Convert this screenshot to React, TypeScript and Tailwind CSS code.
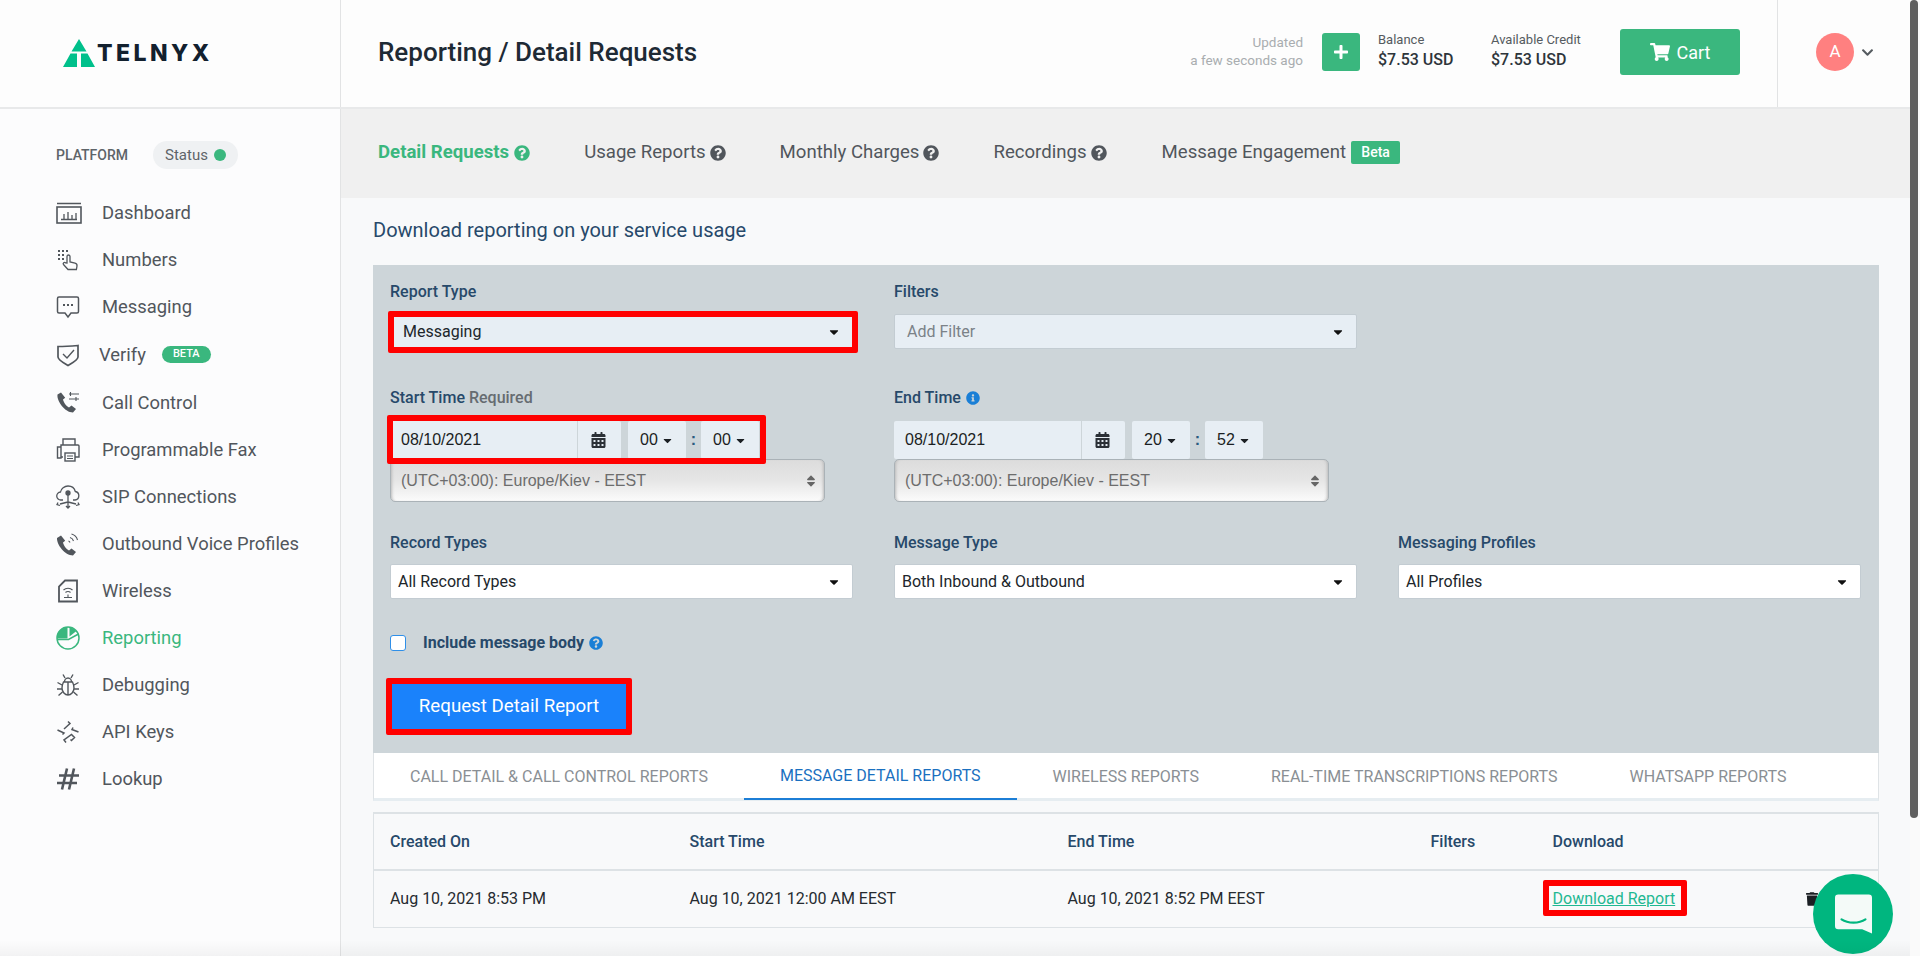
import React from "react";
import { FaCaretDown, FaCalendarAlt, FaChevronDown, FaInfoCircle, FaPlus, FaQuestionCircle, FaShoppingCart, FaSort, FaTrash } from "react-icons/fa";

const iconCls = "w-6 h-6 shrink-0";
const navIcons: Record<string, React.ReactNode> = {
  Dashboard: (
    <svg viewBox="0 0 26 22" className="w-[26px] h-[22px] shrink-0" fill="none" stroke="currentColor" strokeWidth="1.6">
      <rect x="1" y="5" width="24" height="16" />
      <path d="M1 1.5h24M5 17.5h16M8 17v-5M12 17v-7M16 17v-4M20 17v-6" strokeWidth="1.3" />
    </svg>
  ),
  Numbers: (
    <svg viewBox="0 0 24 24" className={iconCls} fill="none" stroke="currentColor" strokeWidth="1.3">
      <path d="M2 3h2M6 3h2M10 3h2M2 7h2M6 7h2M2 11h2M6 11h2" strokeWidth="2" />
      <path d="M11 15V8.5a1.5 1.5 0 0 1 3 0V14l5 1.2c1.5.4 2.2 1.4 2 2.8l-.6 3.5H12l-4.500-5c-1-1.300.8-2.800 2-1.700z" />
    </svg>
  ),
  Messaging: (
    <svg viewBox="0 0 24 24" className={iconCls} fill="none" stroke="currentColor" strokeWidth="1.5">
      <path d="M3 2h18a1.500 1.500 0 0 1 1.500 1.500v13A1.500 1.500 0 0 1 21 18h-6l-3 4-3-4H3a1.500 1.500 0 0 1-1.500-1.500v-13A1.500 1.500 0 0 1 3 2z" />
      <path d="M7 10h2M11 10h2M15 10h2" strokeWidth="2" />
    </svg>
  ),
  Verify: (
    <svg viewBox="0 0 24 24" className={iconCls} fill="none" stroke="currentColor" strokeWidth="1.7">
      <path d="M2 3.500c6 0 14-.5 20-1v11.500c0 3-6 6-10 8.500-4-2.500-10-5.500-10-8.500z" />
      <path d="M7 11l4 4 7-8" strokeWidth="1.4" />
    </svg>
  ),
  "Call Control": (
    <svg viewBox="0 0 24 24" className={iconCls} fill="currentColor">
      <path d="M5 1.500L1.500 3.500C.5 10 9 21.500 17 21.500l3-3.500-4.500-3.500-2.500 2C10 15 7.500 11 7 8.500l2.200-1.800z" />
      <path d="M13 3h10M13 8h10M14.500 1v4M20 6v4" stroke="currentColor" strokeWidth="1.100" fill="none" />
    </svg>
  ),
  "Programmable Fax": (
    <svg viewBox="0 0 24 24" className={iconCls} fill="none" stroke="currentColor" strokeWidth="1.400">
      <path d="M7 7V1h12v6M7 7h15a1 1 0 0 1 1 1v11h-4M7 19H5V7h2M1.500 9H5v11H1.500z" />
      <rect x="9" y="15" width="10" height="8" />
      <path d="M11 18h6M11 20.500h6" strokeWidth="1" />
    </svg>
  ),
  "SIP Connections": (
    <svg viewBox="0 0 24 24" className={iconCls} fill="none" stroke="currentColor" strokeWidth="1.300">
      <path d="M7 15H5a4 4 0 0 1-.5-8C5 3.500 8.500 1 12 1s6.500 2 7.300 5.500A4.300 4.300 0 0 1 19 15h-2" />
      <circle cx="12" cy="8" r="2" fill="currentColor" />
      <path d="M12 10v12M12 17l-8 2M12 17l8 2M10 21l2 2 2-2M2 17.500L1 19.500l3 1M22 17.500l1 2-3 1" />
    </svg>
  ),
  "Outbound Voice Profiles": (
    <svg viewBox="0 0 24 24" className={iconCls} fill="currentColor">
      <path d="M5 3.500L1 6c-.5 6.500 8 17.500 16 17.500l3-3.500-4.500-3.500-2.500 2C10 17 7.500 13 7 10.500l2.200-1.800z" />
      <path d="M14 5.500a5 5 0 0 1 3.500 3.500M15.500 2a8.500 8.500 0 0 1 6 6M12.500 9a2.300 2.300 0 0 1 1.500 1.500" stroke="currentColor" strokeWidth="1.100" fill="none" />
    </svg>
  ),
  Wireless: (
    <svg viewBox="0 0 24 24" className={iconCls} fill="none" stroke="currentColor" strokeWidth="1.800">
      <path d="M9 1.500h12v21H3V7.500z" />
      <path d="M7.500 11a6.500 6.500 0 0 1 9 0M9.500 13.500a3.500 3.500 0 0 1 5 0M8 18.500h8M12 15.500v3" strokeWidth="1.100" />
    </svg>
  ),
  Reporting: (
    <svg viewBox="0 0 24 24" className={iconCls} fill="none">
      <circle cx="12" cy="12" r="11" stroke="#3ab77e" strokeWidth="1.500" />
      <path d="M1 12.500A11 11 0 0 1 11.500 1v11.500zM13.500 1.200A11 11 0 0 1 20.500 5l-7 5.500z" fill="#3ab77e" />
      <path d="M1 13.500h11.500L22.500 8" stroke="#3ab77e" strokeWidth="1.500" />
    </svg>
  ),
  Debugging: (
    <svg viewBox="0 0 24 24" className={iconCls} fill="none" stroke="currentColor" strokeWidth="1.400">
      <path d="M7.500 9h9c1 2 1.500 3.500 1.500 6 0 4-3 7-6 7s-6-3-6-7c0-2.500.5-4 1.500-6zM8.500 9c0-2 1.500-4 3.500-4s3.500 2 3.500 4M12 9v13M9 5L7 1.500M15 5l2-3.500" />
      <path d="M6 12L1.500 9.500M6 16H1M6.500 19l-4 3.500M18 12l4.500-2.500M18 16h5M17.500 19l4 3.500" />
    </svg>
  ),
  "API Keys": (
    <svg viewBox="0 0 24 24" className={iconCls} fill="none" stroke="currentColor" strokeWidth="1.500">
      <path d="M12 1.500l2 2-6 5.500M1.500 10l6.500 3-1.500 1.500M22.500 12l-6.500-2.500 1-2M10 22.500l-2-2.500 7.500-5.500 3 3-3 3-1-1" />
    </svg>
  ),
  Lookup: (
    <svg viewBox="0 0 24 24" className={iconCls} fill="none" stroke="currentColor" strokeWidth="2.600">
      <path d="M11 1.500L6 22.500M18 1.500l-5 21M3 8.500h20M1 16h20" />
    </svg>
  ),
};

const navItems = ["Dashboard", "Numbers", "Messaging", "Verify", "Call Control", "Programmable Fax", "SIP Connections", "Outbound Voice Profiles", "Wireless", "Reporting", "Debugging", "API Keys", "Lookup"];

const reportTabs = ["CALL DETAIL & CALL CONTROL REPORTS", "MESSAGE DETAIL REPORTS", "WIRELESS REPORTS", "REAL-TIME TRANSCRIPTIONS REPORTS", "WHATSAPP REPORTS"];

function RedBox({ className }: { className: string }) {
  return <div className={`absolute border-[6px] border-[#ff0000] rounded-[2px] pointer-events-none ${className}`} />;
}

function Select({ label, tone = "white", muted = false }: { label: string; tone?: "white" | "blue"; muted?: boolean }) {
  return (
    <div className={`h-[35px] w-full rounded-[2px] border border-[#c3ccd2] flex items-center justify-between pr-[11px] text-[16px] ${tone === "blue" ? "bg-[#e7eef4] pl-[12px]" : "bg-white pl-[7px]"} ${muted ? "text-[#7b8288]" : "text-[#20262b]"}`}>
      <span>{label}</span>
      <FaCaretDown className="w-[14px] h-[14px] text-[#111]" />
    </div>
  );
}

function DateTime({ hour, minute, selected }: { hour: string; minute: string; selected?: boolean }) {
  return (
    <div className="relative">
      <div className="flex items-stretch h-[38px] font-['Liberation_Sans',sans-serif] text-[16px] text-[#1b1f23]">
        <div className="w-[187px] bg-[#e7eef4] flex items-center pl-[11px] rounded-l-[2px]">08/10/2021</div>
        <div className="ml-px w-[43px] bg-[#e7eef4] flex items-center justify-center rounded-r-[2px] pr-[2px]">
          <FaCalendarAlt className="w-[15px] h-[16px] text-[#2b3036]" />
        </div>
        <div className="ml-[7px] w-[58px] bg-[#e7eef4] flex items-center justify-center gap-[3px] rounded-[2px]">
          {hour}
          <FaCaretDown className="w-[13px] h-[13px]" />
        </div>
        <div className="w-[15px] flex items-center justify-center text-[#2a5a80] font-bold">:</div>
        <div className="w-[58px] bg-[#e7eef4] flex items-center justify-center gap-[3px] rounded-[2px]">
          {minute}
          <FaCaretDown className="w-[13px] h-[13px]" />
        </div>
      </div>
      {selected && <RedBox className="-left-[3px] -top-[6px] w-[379px] h-[49px]" />}
    </div>
  );
}

function Timezone() {
  return (
    <div className="h-[43px] w-[435px] rounded-[5px] border border-[#aab2b7] bg-gradient-to-b from-[#dcdcdc] via-[#e6e6e6] to-[#fbfbfb] shadow-[inset_3px_0_3px_-2px_#bbb,inset_-3px_0_3px_-2px_#bbb] flex items-center justify-between pl-[10px] pr-[8px] font-['Liberation_Sans',sans-serif] text-[16px] text-[#6d6d6d]">
      <span>(UTC+03:00): Europe/Kiev - EEST</span>
      <FaSort className="w-[10px] h-[14px] text-[#666]" />
    </div>
  );
}

export default function App() {
  return (
    <div className="flex h-screen w-screen overflow-hidden bg-white font-['Roboto',sans-serif]">
      <div className="relative flex-1 min-w-0 flex flex-col">
        {/* Top bar */}
        <header className="h-[109px] shrink-0 flex items-stretch bg-[#fdfdfd] border-b-[2px] border-[#e8e9ea]">
          <div className="w-[341px] shrink-0 border-r border-[#e2e3e4] flex items-center pl-[63px]">
            <svg viewBox="0 0 32 28" className="w-[32px] h-[28px] shrink-0 -mt-[1px]">
              <path d="M16 0l7.500 12.500h-15zM7.500 14.500h6.500V28H0zM18 14.500h6.500L32 28H18z" fill="#00c08b" />
            </svg>
            <span className="ml-[2px] font-['Inter',sans-serif] font-extrabold text-[23px] tracking-[0.15em] text-[#12202e]">TELNYX</span>
          </div>
          <h1 className="ml-[37px] self-center mb-[2px] text-[26px] font-medium text-[#1e2a35]">Reporting / Detail Requests</h1>
          <div className="ml-auto flex items-center">
            <div className="mb-[6px] text-right text-[13.5px] leading-[18px] text-[#a9adb0]">
              <div>Updated</div>
              <div>a few seconds ago</div>
            </div>
            <div className="mb-[3px] ml-[19px] w-[38px] h-[38px] rounded-[3px] bg-[#3ab77e] flex items-center justify-center text-white">
              <FaPlus className="w-[16px] h-[16px]" />
            </div>
            <div className="mb-[8px] ml-[18px] w-[113px]">
              <div className="text-[13px] leading-[20px] text-[#555b60]">Balance</div>
              <div className="text-[16px] leading-[20px] font-medium text-[#2e353b]">$7.53 USD</div>
            </div>
            <div className="mb-[8px] w-[129px]">
              <div className="text-[13px] leading-[20px] text-[#555b60]">Available Credit</div>
              <div className="text-[16px] leading-[20px] font-medium text-[#2e353b]">$7.53 USD</div>
            </div>
            <div className="mb-[3px] w-[120px] h-[46px] rounded-[3px] bg-[#3ab77e] flex items-center justify-center gap-[7px] text-white text-[18px]">
              <FaShoppingCart className="w-[20px] h-[18px]" />
              Cart
            </div>
            <div className="ml-[37px] w-[133px] h-full border-l border-[#e2e3e4] flex items-center pl-[38px]">
              <div className="mb-[3px] w-[38px] h-[38px] rounded-full bg-[#ff8080] flex items-center justify-center text-white text-[17px]">A</div>
              <FaChevronDown className="mb-[3px] ml-[7px] w-[13px] h-[13px] text-[#555b60]" />
            </div>
          </div>
        </header>

        <div className="flex-1 min-h-0 flex">
          {/* Sidebar */}
          <aside className="w-[341px] shrink-0 bg-[#fcfcfd] border-r border-[#e2e3e4] pl-[56px] pt-[32px]">
            <div className="flex items-center h-[28px]">
              <span className="text-[14px] font-medium text-[#5e6469] w-[97px]">PLATFORM</span>
              <span className="h-[28px] rounded-full bg-[#eff1f3] flex items-center gap-[6px] pl-[12px] pr-[12px] text-[15px] text-[#5e6469]">
                Status
                <span className="w-[12px] h-[12px] rounded-full bg-[#3ab77e]" />
              </span>
            </div>
            <nav className="mt-[20px] flex flex-col">
              {navItems.map((item) => (
                <div key={item} className={`${item === "Verify" ? "h-[49px]" : "h-[47px]"} flex items-center text-[18.4px] ${item === "Reporting" ? "text-[#3ab77e]" : "text-[#51565c]"}`}>
                  <span className="w-[46px] shrink-0">{navIcons[item]}</span>
                  <span className={item === "Verify" ? "-ml-[3px]" : ""}>{item}</span>
                  {item === "Verify" && (
                    <span className="ml-[16px] h-[17px] px-[11px] rounded-full bg-[#3ab77e] text-white text-[11px] font-medium flex items-center">BETA</span>
                  )}
                </div>
              ))}
            </nav>
          </aside>

          <main className="flex-1 min-w-0 bg-[#f8f9fa] overflow-hidden">
            {/* Section tabs */}
            <div className="h-[89px] pb-[1px] bg-[#f0f0f0] flex items-center pl-[37px] gap-[54px] text-[18.6px] text-[#51565c]">
              <span className="flex items-center gap-[5px] font-bold text-[#3ab77e]">
                Detail Requests
                <FaQuestionCircle className="w-[16px] h-[16px]" />
              </span>
              {["Usage Reports", "Monthly Charges", "Recordings"].map((tab) => (
                <span key={tab} className="flex items-center gap-[4px]">
                  {tab}
                  <FaQuestionCircle className="w-[16px] h-[16px]" />
                </span>
              ))}
              <span className="ml-[1px] flex items-center gap-[5px]">
                Message Engagement
                <span className="h-[23px] w-[49px] rounded-[2px] bg-[#3ab77e] text-white text-[14px] font-medium flex items-center justify-center">Beta</span>
              </span>
            </div>

            <div className="pl-[32px] pr-[31px]">
              <h2 className="h-[67px] pb-[3px] flex items-center text-[20px] text-[#27496a]">Download reporting on your service usage</h2>

              {/* Filter form */}
              <section className="bg-[#cdd5d9] h-[488px] pl-[17px] pr-[16px] pt-[17px]">
                <div className="grid grid-cols-[463px_463px_463px] gap-x-[41px]">
                  <div>
                    <label className="block text-[16px] leading-[20px] font-medium text-[#27496a]">Report Type</label>
                    <div className="relative mt-[12px]">
                      <Select label="Messaging" tone="blue" />
                      <RedBox className="-left-[2px] -top-[3px] w-[470px] h-[42px]" />
                    </div>
                  </div>
                  <div>
                    <label className="block text-[16px] leading-[20px] font-medium text-[#27496a]">Filters</label>
                    <div className="mt-[12px]">
                      <Select label="Add Filter" tone="blue" muted />
                    </div>
                  </div>
                  <div />

                  <div className="mt-[39px]">
                    <label className="block text-[16px] leading-[20px] font-medium text-[#27496a]">
                      Start Time <span className="text-[#666c71]">Required</span>
                    </label>
                    <div className="mt-[13px]">
                      <DateTime hour="00" minute="00" selected />
                      <Timezone />
                    </div>
                  </div>
                  <div className="mt-[39px]">
                    <label className="flex items-center gap-[5px] text-[16px] leading-[20px] font-medium text-[#27496a]">
                      End Time <FaInfoCircle className="w-[14px] h-[14px] text-[#1a7fd6]" />
                    </label>
                    <div className="mt-[13px]">
                      <DateTime hour="20" minute="52" />
                      <Timezone />
                    </div>
                  </div>
                  <div />

                  <div className="mt-[31px]">
                    <label className="block text-[16px] leading-[20px] font-medium text-[#27496a]">Record Types</label>
                    <div className="mt-[11px]"><Select label="All Record Types" /></div>
                  </div>
                  <div className="mt-[31px]">
                    <label className="block text-[16px] leading-[20px] font-medium text-[#27496a]">Message Type</label>
                    <div className="mt-[11px]"><Select label="Both Inbound & Outbound" /></div>
                  </div>
                  <div className="mt-[31px]">
                    <label className="block text-[16px] leading-[20px] font-medium text-[#27496a]">Messaging Profiles</label>
                    <div className="mt-[11px]"><Select label="All Profiles" /></div>
                  </div>
                </div>

                <div className="mt-[35px] flex items-center h-[17px]">
                  <span className="w-[16px] h-[16px] rounded-[3px] bg-white border border-[#2f8fe8]" />
                  <span className="ml-[17px] text-[16px] font-bold text-[#27496a]">Include message body</span>
                  <FaQuestionCircle className="ml-[5px] w-[14px] h-[14px] text-[#1a7fd6]" />
                </div>

                <div className="relative mt-[33px] ml-[2px] w-[234px]">
                  <div className="h-[45px] bg-[#1a82fb] text-white text-[18.7px] flex items-center justify-center">Request Detail Report</div>
                  <RedBox className="-left-[6px] -top-[6px] w-[246px] h-[57px]" />
                </div>
              </section>

              {/* Report tabs */}
              <div className="h-[48px] bg-white border-x border-[#dfe3e6] border-b-[3px] border-b-[#e6edf1] flex text-[16px] text-[#8a8f94]">
                {reportTabs.map((tab) => (
                  <div key={tab} className={`h-[47px] px-[36px] flex items-center ${tab === "MESSAGE DETAIL REPORTS" ? "border-b-2 border-[#1c7ed6] text-[#1a70c0]" : ""}`}>
                    {tab}
                  </div>
                ))}
              </div>

              {/* Table */}
              <table className="mt-[11px] w-full border-collapse border-x border-[#dde2e5] text-[16px]">
                <thead>
                  <tr className="h-[57px] border-y-2 border-[#dde2e5] text-left font-medium text-[#27496a]">
                    <th className="pl-[16px] w-[316px] font-medium">Created On</th>
                    <th className="w-[378px] font-medium">Start Time</th>
                    <th className="w-[363px] font-medium">End Time</th>
                    <th className="w-[122px] font-medium">Filters</th>
                    <th className="font-medium">Download</th>
                  </tr>
                </thead>
                <tbody>
                  <tr className="h-[57px] border-b border-[#dde2e5] text-[#262b30]">
                    <td className="pl-[16px]">Aug 10, 2021 8:53 PM</td>
                    <td>Aug 10, 2021 12:00 AM EEST</td>
                    <td>Aug 10, 2021 8:52 PM EEST</td>
                    <td />
                    <td>
                      <div className="flex items-center justify-between pr-[60px]">
                        <span className="relative text-[#1fb892] underline">
                          Download Report
                          <RedBox className="-left-[10px] -top-[7px] w-[144px] h-[36px]" />
                        </span>
                        <FaTrash className="w-[12px] h-[14px] text-[#1b1f23]" />
                      </div>
                    </td>
                  </tr>
                </tbody>
              </table>
            </div>
          </main>
        </div>

        {/* Chat launcher */}
        <div className="absolute left-[1813px] top-[874px] w-[80px] h-[80px] rounded-full bg-[#00b67f] flex items-center justify-center">
          <svg viewBox="0 0 34 36" className="w-[37px] h-[40px]">
            <path d="M3 0h28a3 3 0 0 1 3 3v33l-9-4H3a3 3 0 0 1-3-3V3a3 3 0 0 1 3-3z" fill="#f4faf8" />
            <path d="M6 23c6 4 16 4 22 0" fill="none" stroke="#00b67f" strokeWidth="2" strokeLinecap="round" />
          </svg>
        </div>
        <div className="absolute inset-x-0 bottom-0 h-[16px] bg-gradient-to-b from-transparent to-[#0000000a] pointer-events-none" />
      </div>

      {/* Scrollbar */}
      <div className="w-[10px] shrink-0 bg-[#fafafa]">
        <div className="w-[8px] h-[818px] rounded-full bg-[#5e5e5e]" />
      </div>
    </div>
  );
}
